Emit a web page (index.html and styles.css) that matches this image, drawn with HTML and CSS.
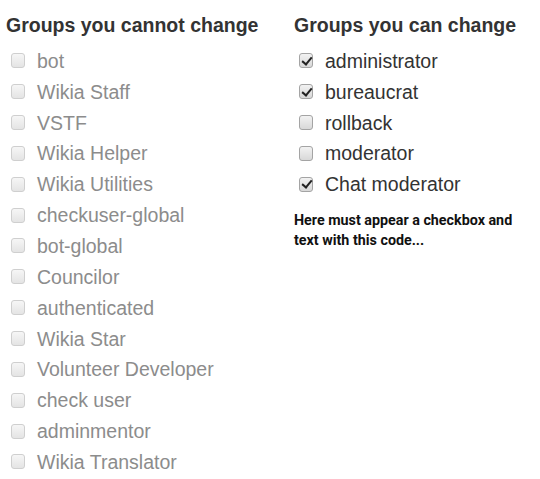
FILE: index.html
```html
<!DOCTYPE html>
<html lang="en">

<head>
  <meta charset="UTF-8">
  <meta name="viewport" content="width=device-width, initial-scale=1.0">
  <title>User rights groups</title>
  <link rel="stylesheet" href="styles.css">
</head>

<body>
  <div class="groups">
    <!-- left: fixed groups -->
    <div class="group-col left">
      <h3 class="group-title">Groups you cannot change</h3>
      <ul class="group-list">
        <li class="group-item off"><input type="checkbox" disabled><span>bot</span></li>
        <li class="group-item off"><input type="checkbox" disabled><span>Wikia Staff</span></li>
        <li class="group-item off"><input type="checkbox" disabled><span>VSTF</span></li>
        <li class="group-item off"><input type="checkbox" disabled><span>Wikia Helper</span></li>
        <li class="group-item off"><input type="checkbox" disabled><span>Wikia Utilities</span></li>
        <li class="group-item off"><input type="checkbox" disabled><span>checkuser-global</span></li>
        <li class="group-item off"><input type="checkbox" disabled><span>bot-global</span></li>
        <li class="group-item off"><input type="checkbox" disabled><span>Councilor</span></li>
        <li class="group-item off"><input type="checkbox" disabled><span>authenticated</span></li>
        <li class="group-item off"><input type="checkbox" disabled><span>Wikia Star</span></li>
        <li class="group-item off"><input type="checkbox" disabled><span>Volunteer Developer</span></li>
        <li class="group-item off"><input type="checkbox" disabled><span>check user</span></li>
        <li class="group-item off"><input type="checkbox" disabled><span>adminmentor</span></li>
        <li class="group-item off"><input type="checkbox" disabled><span>Wikia Translator</span></li>
      </ul>
    </div>

    <!-- right: editable groups -->
    <div class="group-col right">
      <h3 class="group-title">Groups you can change</h3>
      <ul class="group-list">
        <li class="group-item"><input type="checkbox" checked><span>administrator</span></li>
        <li class="group-item"><input type="checkbox" checked><span>bureaucrat</span></li>
        <li class="group-item"><input type="checkbox"><span>rollback</span></li>
        <li class="group-item"><input type="checkbox"><span>moderator</span></li>
        <li class="group-item"><input type="checkbox" checked><span>Chat moderator</span></li>
      </ul>
      <p class="note">Here must appear a checkbox and text with this code...</p>
    </div>
  </div>
</body>

</html>
```

FILE: styles.css
```css
body {
  margin: 0;
  background: #fff;
  font-family: Arial, "Liberation Sans", sans-serif;
  color: #333;
}

.groups {
  display: flex;
  padding-top: 10px;
}

.group-col.left {
  width: 288px;
  padding-left: 6px;
}

.group-title {
  margin: 0 0 6px;
  font-size: 19.5px;
  line-height: 30px;
  font-weight: bold;
  color: #333;
}

.group-list {
  list-style: none;
  margin: 0;
  padding: 0;
}

.group-item {
  display: flex;
  align-items: center;
  height: 30.85px;
  font-size: 19.5px;
  color: #333;
}

.group-item.off {
  color: #8c8c8c;
}

/* checkbox look */
.group-item input {
  appearance: none;
  -webkit-appearance: none;
  position: relative;
  width: 14px;
  height: 15px;
  margin: -1px 12px 0 5px;
  border: 1px solid #a4a4a4;
  border-radius: 3px;
  background: linear-gradient(#f2f2f2, #d8d8d8);
  box-sizing: border-box;
  flex: none;
}

.group-item.off input {
  border-color: #cfcfcf;
  background: linear-gradient(#f6f6f6, #e4e4e4);
}

.group-item input:checked::after {
  content: "";
  position: absolute;
  left: 3.5px;
  top: 0.5px;
  width: 4px;
  height: 8px;
  border: solid #222;
  border-width: 0 2.5px 2.5px 0;
  transform: rotate(40deg);
}

.note {
  margin: 10px 0 0;
  width: 240px;
  font-family: Roboto, Arial, sans-serif;
  font-weight: bold;
  font-size: 14.3px;
  line-height: 20px;
  color: #111;
}
```
